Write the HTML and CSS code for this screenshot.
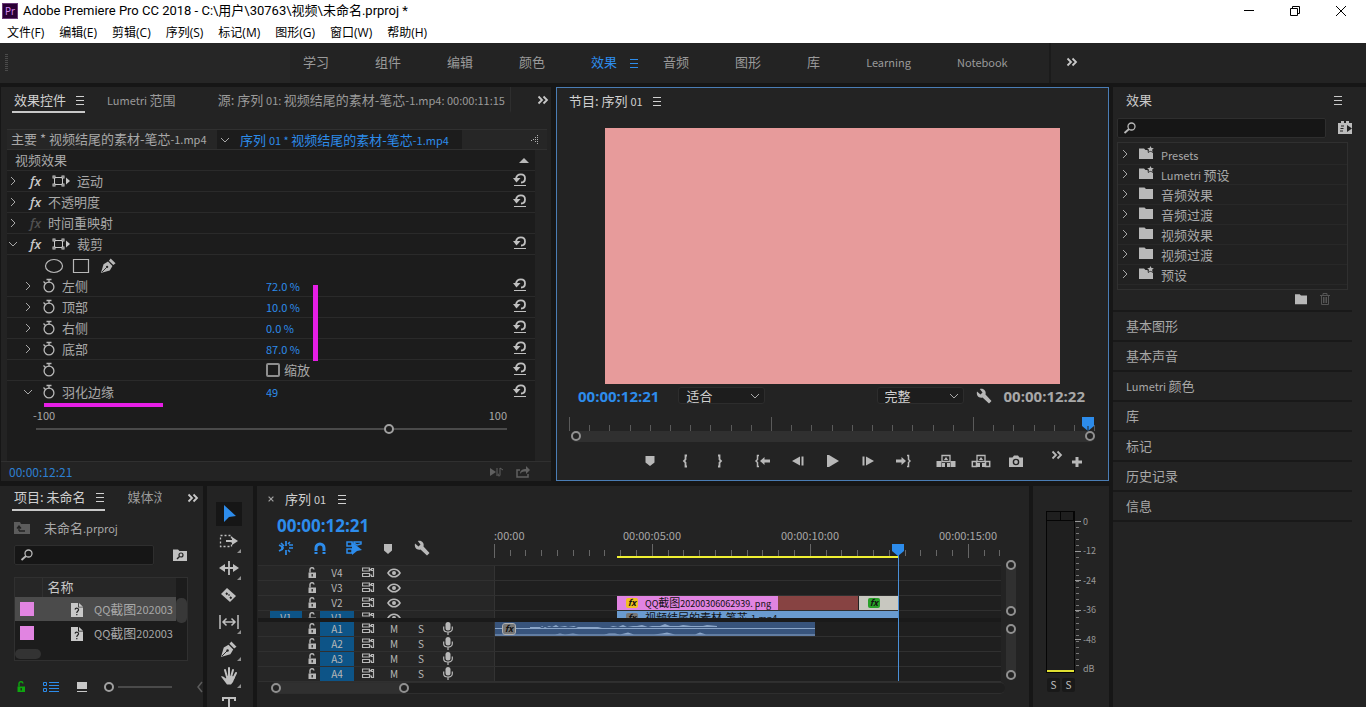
FILE: index.html
```html
<!DOCTYPE html>
<html lang="zh-CN">
<head>
    <meta charset="UTF-8">
    <meta name="viewport" content="width=device-width, initial-scale=1.0">
    <title>Adobe Premiere Pro CC 2018</title>
    <link rel="stylesheet" href="styles.css">
</head>
<body>

<svg class="sprite" aria-hidden="true">
    <symbol id="i-menu" viewBox="0 0 10 10"><path d="M1 1.5h8M1 5.5h8M1 9.5h8" fill="none" stroke="currentColor"/></symbol>
    <symbol id="i-more" viewBox="0 0 12 10"><path d="M1.5 1.5L5 5 1.5 8.500M6.500 1.500L10 5 6.500 8.500" fill="none" stroke="currentColor" stroke-width="1.800"/></symbol>
    <symbol id="i-right" viewBox="0 0 10 10"><path d="M3 1l4 4-4 4" fill="none" stroke="currentColor"/></symbol>
    <symbol id="i-down" viewBox="0 0 10 10"><path d="M1 3l4 4 4-4" fill="none" stroke="currentColor"/></symbol>
    <symbol id="i-motion" viewBox="0 0 20 12"><path d="M3.500 2.500h8v7h-8z" fill="none" stroke="currentColor"/><path d="M1.500 .5h3v3h-3zM10.500 .5h3v3h-3zM1.500 8.500h3v3h-3zM10.500 8.500h3v3h-3z" fill="currentColor"/><path d="M2.500 1.500h1v1h-1zM11.500 1.500h1v1h-1zM2.500 9.500h1v1h-1zM11.500 9.500h1v1h-1z" fill="#1c1c1c"/><path d="M15 2.500l4 3.500-4 3.500z" fill="currentColor"/></symbol>
    <symbol id="i-reset" viewBox="0 0 14 14"><path d="M3 5.500C4 0 12 0 12 5.500c0 2.500-1.500 4-4 4" fill="none" stroke="currentColor" stroke-width="1.800"/><path d="M0 5h7.500L3.500 9.500z" fill="currentColor"/><path d="M1 12.500h12" stroke="currentColor"/></symbol>
    <symbol id="i-watch" viewBox="0 0 14 16"><circle cx="7" cy="9" r="4.900" fill="none" stroke="currentColor" stroke-width="1.300"/><path d="M4.500 1.500h5M7 1.500v3M1.500 3.500l2 2" fill="none" stroke="currentColor" stroke-width="1.300"/></symbol>
    <symbol id="i-pen" viewBox="0 0 18 18"><path d="M1 17l3-10 5-3 5 5-3 5-10 3z" fill="currentColor"/><path d="M10 3l2-2.500 5.500 5.500-2.500 2z" fill="currentColor"/><path d="M2 16l5.500-5.500" stroke="#222" stroke-width="1"/><circle cx="8" cy="10" r="1.300" fill="#222"/></symbol>
    <symbol id="i-search" viewBox="0 0 14 12"><circle cx="8.500" cy="4.500" r="3.500" fill="none" stroke="currentColor" stroke-width="1.300"/><path d="M6 7l-4.500 4" stroke="currentColor" stroke-width="1.800"/></symbol>
    <symbol id="i-folder" viewBox="0 0 16 14"><path d="M1 3V1.500h5.500L8 3h7v10H1z" fill="currentColor"/></symbol>
    <symbol id="i-folder-star" viewBox="0 0 16 14"><path d="M1 4V2.500h5L7.500 4h2l.5 3 2.500-1.500L15 7v6H1z" fill="currentColor"/><path d="M12.500 0l1 2 2.300.2-1.700 1.500.5 2.200-2.100-1.100-2 1.100.5-2.200L9.200 2.200l2.300-.2z" fill="currentColor"/></symbol>
    <symbol id="i-lock" viewBox="0 0 10 12"><path d="M1.500 5.500h7.500v5.500H1.500z" fill="currentColor"/><path d="M3 5.500V3a2 2 0 0 1 4-.5" fill="none" stroke="currentColor" stroke-width="1.400"/><path d="M5.200 7v2.500" stroke="#222" stroke-width="1.300"/></symbol>
    <symbol id="i-sync" viewBox="0 0 13 11"><path d="M.5 1h7v3h-7zM.5 6.500h7v3h-7z" fill="none" stroke="currentColor" stroke-width="1.200"/><path d="M8 2.500h1.500V1.500h2v2H9.500zM11.500 3.500V9M8 8h1.500v1.500h2V7" fill="none" stroke="currentColor" stroke-width="1.200"/></symbol>
    <symbol id="i-eye" viewBox="0 0 14 10"><path d="M1 5c3-5 9-5 12 0-3 5-9 5-12 0z" fill="none" stroke="currentColor" stroke-width="1.600"/><circle cx="7" cy="5" r="2" fill="currentColor"/></symbol>
    <symbol id="i-mic" viewBox="0 0 10 13"><rect x="2.500" y="0" width="5" height="8.500" rx="2.500" fill="currentColor"/><path d="M.7 4.500v2.500c0 4 8.600 4 8.600 0V4.500M5 10v3" fill="none" stroke="currentColor" stroke-width="1.200"/></symbol>
    <symbol id="i-marker" viewBox="0 0 10 12"><path d="M.5 1h9v6.500L5 11 .5 7.500z" fill="currentColor"/></symbol>
    <symbol id="i-wrench" viewBox="0 0 16 16"><path d="M1 3.500l3.500 3L6.500 4.500 3.800 1C7.500 0 10.500 3 9.500 6.500l6 6.500-2.500 2.500-6.500-6C3 10.500 0 7.500 1 3.500z" fill="currentColor"/></symbol>
    <symbol id="i-file" viewBox="0 0 12 14"><path d="M0 0h7v4.500h5V14H0z" fill="currentColor"/><path d="M8 0l4 3.700H8z" fill="currentColor"/><path d="M4 6.500c.5-2 4-1.500 3.500.5C7 8.500 5.800 8 5.800 10M5.800 11v1.300" fill="none" stroke="#222" stroke-width="1.200"/></symbol>
    <symbol id="i-in" viewBox="0 0 6 14"><path d="M5 1.500H3.500v4L2 7l1.500 1.500v4H5" fill="none" stroke="currentColor" stroke-width="1.800"/></symbol>
    <symbol id="i-out" viewBox="0 0 6 14"><path d="M1 1.500h1.500v4L4 7 2.500 8.500v4H1" fill="none" stroke="currentColor" stroke-width="1.800"/></symbol>
    <symbol id="i-to-in" viewBox="0 0 16 14"><path d="M4 1.500H2.500v4L1 7l1.500 1.500v4H4" fill="none" stroke="currentColor" stroke-width="1.500"/><path d="M5 7l4.500-4v2.500H15v3H9.500V11z" fill="currentColor"/></symbol>
    <symbol id="i-to-out" viewBox="0 0 16 14"><path d="M12 1.500h1.500v4L15 7l-1.500 1.500v4H12" fill="none" stroke="currentColor" stroke-width="1.500"/><path d="M11 7L6.500 3v2.500H1v3h5.500V11z" fill="currentColor"/></symbol>
    <symbol id="i-back" viewBox="0 0 14 12"><path d="M1 6l8-4.500v9zM10.500 1.500h2v9h-2z" fill="currentColor"/></symbol>
    <symbol id="i-step" viewBox="0 0 14 12"><path d="M13 6L5 1.500v9zM1.500 1.500h2v9h-2z" fill="currentColor"/></symbol>
    <symbol id="i-play" viewBox="0 0 14 14"><path d="M1 1h2l10 6-10 6H1z" fill="currentColor"/></symbol>
    <symbol id="i-lift" viewBox="0 0 20 14"><path d="M.5 7h5v6h-5zM6 9h3v4H6zM14.500 7h5v6h-5zM11 9h3v4h-3z" fill="currentColor"/><path d="M6 1.500h8v6H6z" fill="none" stroke="currentColor" stroke-width="1.300"/><path d="M10 3l2.200 3H7.800z" fill="currentColor"/></symbol>
    <symbol id="i-extract" viewBox="0 0 20 14"><path d="M1.300 7.500h4.200v5H1.300zM14.500 7.500h4.200v5h-4.200z" fill="none" stroke="currentColor" stroke-width="1.500"/><path d="M6 9h3v4H6zM11 9h3v4h-3z" fill="currentColor"/><path d="M6 1.500h8v6H6z" fill="none" stroke="currentColor" stroke-width="1.300"/><path d="M10 3l2.200 3H7.800z" fill="currentColor"/></symbol>
    <symbol id="i-camera" viewBox="0 0 16 12"><path d="M1 2.500h3.500L6 .5h4l1.500 2H15V12H1z" fill="currentColor"/><circle cx="8" cy="7" r="2.600" fill="none" stroke="#232323" stroke-width="1.400"/></symbol>
    <symbol id="i-plus" viewBox="0 0 12 12"><path d="M6 1v10M1 6h10" stroke="currentColor" stroke-width="3"/></symbol>
    <symbol id="i-close" viewBox="0 0 10 10"><path d="M1 1l8 8M9 1L1 9" fill="none" stroke="currentColor" stroke-width="2"/></symbol>
</svg>

<header class="window-head">
    <div class="title-bar">
        <svg class="logo" viewBox="0 0 16 16"><rect width="16" height="16" fill="#2a0034"/><rect x=".5" y=".5" width="15" height="15" fill="none" stroke="#6b3a78"/><text x="3" y="12" class="logo-text">Pr</text></svg>
        <span class="title-text">Adobe Premiere Pro CC 2018 - C:\用户\30763\视频\未命名.prproj *</span>
        <div class="window-buttons">
            <button aria-label="最小化"><svg viewBox="0 0 12 12"><path d="M1 5.500h10" stroke="#000"/></svg></button>
            <button aria-label="还原"><svg viewBox="0 0 12 12"><path d="M1.500 3.500h7v7h-7zM3.500 3.500v-2h7v7h-2" fill="none" stroke="#000"/></svg></button>
            <button aria-label="关闭"><svg viewBox="0 0 12 12"><path d="M1 1l10 10M11 1L1 11" stroke="#000"/></svg></button>
        </div>
    </div>
    <nav class="menu-bar">
        <button>文件(F)</button>
        <button>编辑(E)</button>
        <button>剪辑(C)</button>
        <button>序列(S)</button>
        <button>标记(M)</button>
        <button>图形(G)</button>
        <button>窗口(W)</button>
        <button>帮助(H)</button>
    </nav>
</header>

<nav class="workspaces">
    <div class="workspace-left"><span class="grip"></span></div>
    <div class="workspace-tabs">
        <button>学习</button>
        <button>组件</button>
        <button>编辑</button>
        <button>颜色</button>
        <button class="active">效果<svg class="icon-10 ws-menu"><use href="#i-menu"/></svg></button>
        <button>音频</button>
        <button>图形</button>
        <button>库</button>
        <button class="latin">Learning</button>
        <button class="latin">Notebook</button>
    </div>
    <button class="workspace-more" aria-label="更多"><svg class="icon-12"><use href="#i-more"/></svg></button>
</nav>

<main class="app">
    <div class="left-area">
        <div class="top-row">

            <!-- Effect controls -->
            <section class="panel effect-controls">
                <div class="tabs">
                    <button class="tab active">效果控件<svg class="icon-10"><use href="#i-menu"/></svg></button>
                    <button class="tab"><span><span class="latin">Lumetri </span>范围</span></button>
                    <button class="tab source-tab"><span>源: 序列 <span class="latin">01: </span>视频结尾的素材-笔芯<span class="latin">-1.mp4: 00:00:11:15</span></span></button>
                    <button class="tabs-more" aria-label="更多"><svg class="icon-12"><use href="#i-more"/></svg></button>
                </div>
                <div class="clip-bar">
                    <span class="clip-master">主要 * 视频结尾的素材-笔芯<span class="latin">-1.mp4</span></span>
                    <span class="clip-sequence"><svg class="icon-10"><use href="#i-down"/></svg><span>序列 <span class="latin">01 * </span>视频结尾的素材-笔芯<span class="latin">-1.mp4</span></span></span>
                    <svg class="clip-arrow" viewBox="0 0 10 12"><path d="M7.500 1v10M5.500 3v6M3.500 5v2M1.500 6v1" stroke="#b0b0b0" stroke-dasharray="1 1"/></svg>
                </div>
                <div class="effects">
                    <div class="effect-row heading"><span>视频效果</span><span class="tri-up"></span></div>
                    <div class="effect-row">
                        <svg class="icon-10"><use href="#i-right"/></svg><i class="fx">fx</i><svg class="motion"><use href="#i-motion"/></svg><span>运动</span>
                        <button class="reset" aria-label="重置"><svg><use href="#i-reset"/></svg></button>
                    </div>
                    <div class="effect-row">
                        <svg class="icon-10"><use href="#i-right"/></svg><i class="fx">fx</i><span>不透明度</span>
                        <button class="reset" aria-label="重置"><svg><use href="#i-reset"/></svg></button>
                    </div>
                    <div class="effect-row">
                        <svg class="icon-10"><use href="#i-right"/></svg><i class="fx off">fx</i><span>时间重映射</span>
                    </div>
                    <div class="effect-row">
                        <svg class="icon-10"><use href="#i-down"/></svg><i class="fx">fx</i><svg class="motion"><use href="#i-motion"/></svg><span>裁剪</span>
                        <button class="reset" aria-label="重置"><svg><use href="#i-reset"/></svg></button>
                    </div>
                    <div class="effect-row shapes">
                        <svg viewBox="0 0 20 16"><ellipse cx="10" cy="8" rx="8.500" ry="6.500" fill="none" stroke="currentColor" stroke-width="1.200"/></svg>
                        <svg viewBox="0 0 20 16"><path d="M2.500 1.500h15v13h-15z" fill="none" stroke="currentColor" stroke-width="1.200"/></svg>
                        <svg><use href="#i-pen"/></svg>
                    </div>
                    <div class="effect-row param">
                        <svg class="icon-10"><use href="#i-right"/></svg><svg class="watch"><use href="#i-watch"/></svg><label for="left">左侧</label>
                        <input type="text" id="left" value="72.0 %">
                        <button class="reset" aria-label="重置"><svg><use href="#i-reset"/></svg></button>
                    </div>
                    <div class="effect-row param">
                        <svg class="icon-10"><use href="#i-right"/></svg><svg class="watch"><use href="#i-watch"/></svg><label for="top">顶部</label>
                        <input type="text" id="top" value="10.0 %">
                        <button class="reset" aria-label="重置"><svg><use href="#i-reset"/></svg></button>
                    </div>
                    <div class="effect-row param">
                        <svg class="icon-10"><use href="#i-right"/></svg><svg class="watch"><use href="#i-watch"/></svg><label for="right">右侧</label>
                        <input type="text" id="right" value="0.0 %">
                        <button class="reset" aria-label="重置"><svg><use href="#i-reset"/></svg></button>
                    </div>
                    <div class="effect-row param">
                        <svg class="icon-10"><use href="#i-right"/></svg><svg class="watch"><use href="#i-watch"/></svg><label for="bottom">底部</label>
                        <input type="text" id="bottom" value="87.0 %">
                        <button class="reset" aria-label="重置"><svg><use href="#i-reset"/></svg></button>
                    </div>
                    <div class="effect-row param">
                        <span class="no-arrow"></span><svg class="watch"><use href="#i-watch"/></svg><span class="no-label"></span>
                        <input type="checkbox" id="zoom"><label class="zoom-label" for="zoom">缩放</label>
                        <button class="reset" aria-label="重置"><svg><use href="#i-reset"/></svg></button>
                    </div>
                    <div class="effect-row param last">
                        <svg class="icon-10"><use href="#i-down"/></svg><svg class="watch"><use href="#i-watch"/></svg><label for="feather">羽化边缘</label>
                        <input type="text" id="feather" value="49">
                        <button class="reset" aria-label="重置"><svg><use href="#i-reset"/></svg></button>
                    </div>
                    <div class="feather">
                        <div class="feather-scale"><span>-100</span><span>100</span></div>
                        <input class="range feather-range" type="range" min="-100" max="100" value="51" aria-label="羽化边缘">
                    </div>
                    <span class="mark mark-values"></span>
                    <span class="mark mark-feather"></span>
                </div>
                <div class="effect-foot">
                    <span>00:00:12:21</span>
                    <svg viewBox="0 0 16 12"><path d="M1 2l6 4-6 4z" fill="currentColor"/><path d="M8 2v8M11 9V2l3 2M11 9a1 1 0 1 1-1-1" fill="none" stroke="currentColor"/></svg>
                    <svg viewBox="0 0 16 12"><path d="M5 4H2v7h11V8" fill="none" stroke="currentColor" stroke-width="1.500"/><path d="M5 8c0-4 3-5 6-5V0l4 4-4 4V5.500C8 5.500 6 6 5 8z" fill="currentColor"/></svg>
                </div>
            </section>

            <!-- Program monitor -->
            <section class="panel program">
                <div class="panel-title"><span>节目: 序列 <span class="latin">01</span></span><svg class="icon-10"><use href="#i-menu"/></svg></div>
                <div class="video"></div>
                <div class="monitor-info">
                    <span class="timecode">00:00:12:21</span>
                    <span class="select-wrap fit"><select aria-label="缩放级别"><option>适合</option></select><svg class="icon-10"><use href="#i-down"/></svg></span>
                    <span class="select-wrap full"><select aria-label="回放分辨率"><option>完整</option></select><svg class="icon-10"><use href="#i-down"/></svg></span>
                    <button aria-label="设置"><svg class="icon-16"><use href="#i-wrench"/></svg></button>
                    <span class="duration">00:00:12:22</span>
                </div>
                <div class="monitor-ruler">
                    <svg width="100%" height="14">
                        <pattern id="ticks-a" width="202" height="14" patternUnits="userSpaceOnUse"><path d="M.5 0v14M20.500 8v6M40.500 8v6M61.500 8v6M81.500 8v6M101.500 8v6M121.500 8v6M141.500 8v6M162.500 8v6M182.500 8v6" stroke="#5a5a5a"/></pattern>
                        <rect width="100%" height="14" fill="url(#ticks-a)"/>
                    </svg>
                    <svg class="monitor-head" viewBox="0 0 12 14"><path d="M0 0h12v9l-6 5-6-5z" fill="#2d8ceb"/><path d="M6 9v5" stroke="#232323"/></svg>
                </div>
                <div class="scroll-bar"><span class="knob"></span><span class="knob"></span></div>
                <div class="transport">
                    <div class="transport-group">
                        <button aria-label="添加标记"><svg width="10" height="12"><use href="#i-marker"/></svg></button>
                        <button aria-label="标记入点"><svg width="6" height="14"><use href="#i-in"/></svg></button>
                        <button aria-label="标记出点"><svg width="6" height="14"><use href="#i-out"/></svg></button>
                    </div>
                    <div class="transport-group">
                        <button aria-label="转到入点"><svg width="16" height="14"><use href="#i-to-in"/></svg></button>
                        <button aria-label="后退一帧"><svg width="14" height="12"><use href="#i-back"/></svg></button>
                        <button aria-label="播放"><svg width="14" height="14"><use href="#i-play"/></svg></button>
                        <button aria-label="前进一帧"><svg width="14" height="12"><use href="#i-step"/></svg></button>
                        <button aria-label="转到出点"><svg width="16" height="14"><use href="#i-to-out"/></svg></button>
                    </div>
                    <div class="transport-group">
                        <button aria-label="提升"><svg width="20" height="14"><use href="#i-lift"/></svg></button>
                        <button aria-label="提取"><svg width="20" height="14"><use href="#i-extract"/></svg></button>
                        <button aria-label="导出帧"><svg width="16" height="12"><use href="#i-camera"/></svg></button>
                    </div>
                    <button class="transport-more" aria-label="更多"><svg class="icon-12"><use href="#i-more"/></svg></button>
                    <button aria-label="按钮编辑器"><svg width="12" height="12"><use href="#i-plus"/></svg></button>
                </div>
            </section>
        </div>

        <div class="bottom-row">

            <!-- Project -->
            <section class="panel project">
                <div class="tabs">
                    <button class="tab active">项目: 未命名<svg class="icon-10"><use href="#i-menu"/></svg></button>
                    <button class="tab media-tab">媒体浏览器</button>
                    <button class="tabs-more" aria-label="更多"><svg class="icon-12"><use href="#i-more"/></svg></button>
                </div>
                <div class="project-name">
                    <svg viewBox="0 0 16 14"><path d="M0 3V1h6l1 2h9v10H0z" fill="#5c5c5c"/><path d="M5 10h6M5 10V6M3 7.500L5 5l2 2.500" fill="none" stroke="#222" stroke-width="1.300"/></svg>
                    <span>未命名<span class="latin">.prproj</span></span>
                </div>
                <div class="search-row">
                    <div class="search"><svg><use href="#i-search"/></svg><input type="text" aria-label="搜索项目"></div>
                    <button aria-label="创建搜索素材箱"><svg viewBox="0 0 16 14"><path d="M1 3V1.500h5L7.500 3H15v10H1z" fill="#c0c0c0"/><circle cx="9" cy="7" r="2" fill="none" stroke="#222" stroke-width="1.200"/><path d="M7.500 8.500L5 11" stroke="#222" stroke-width="1.400"/></svg></button>
                </div>
                <div class="bin">
                    <table>
                        <thead>
                            <tr><th class="col-label"></th><th>名称</th></tr>
                        </thead>
                        <tbody>
                            <tr class="selected"><td><span class="swatch"></span></td><td><svg class="file"><use href="#i-file"/></svg><span class="latin">QQ</span>截图<span class="latin">202003</span></td></tr>
                            <tr><td><span class="swatch"></span></td><td><svg class="file"><use href="#i-file"/></svg><span class="latin">QQ</span>截图<span class="latin">202003</span></td></tr>
                        </tbody>
                    </table>
                    <span class="bin-scroll"></span>
                    <span class="bin-thumb"></span>
                </div>
                <div class="project-foot">
                    <svg class="green" width="10" height="12"><use href="#i-lock"/></svg>
                    <svg class="blue" width="18" height="12" viewBox="0 0 18 12"><path d="M1.500 1.500h3v3h-3zM1.500 7.500h3v3h-3zM7 1.500h10M7 4.500h10M7 7.500h10M7 10.500h10" fill="none" stroke="currentColor"/></svg>
                    <svg width="12" height="12" viewBox="0 0 12 12"><path d="M1 1h10v7H1zM1 10h10v1H1z" fill="#c8c8c8"/></svg>
                    <input class="range" type="range" value="0" aria-label="图标大小">
                    <svg class="foot-arrow" width="6" height="12" viewBox="0 0 6 12"><path d="M5 1L1 6l4 5" fill="none" stroke="#5c5c5c" stroke-width="1.500"/></svg>
                </div>
            </section>

            <!-- Tools -->
            <section class="panel tools">
                <button class="active" aria-label="选择工具"><svg viewBox="0 0 20 20"><path d="M5 1l12 11-7 1-5 5z" fill="#2d8ceb"/></svg></button>
                <button class="more" aria-label="向前选择轨道工具"><svg viewBox="0 0 20 20"><path d="M1.500 4.500h11v11h-11z" fill="none" stroke="currentColor" stroke-width="1.300" stroke-dasharray="2 2"/><path d="M7 9h6V6l6 4-6 4v-3H7z" fill="currentColor"/></svg></button>
                <button class="more" aria-label="波纹编辑工具"><svg viewBox="0 0 20 20"><path d="M10 3v14" stroke="currentColor" stroke-width="1.800"/><path d="M0 10l6-4v3h8V6l6 4-6 4v-3H6v3z" fill="currentColor"/></svg></button>
                <button aria-label="剃刀工具"><svg viewBox="0 0 20 20"><path d="M8 3l9 8-6 6-9-8z" fill="currentColor"/><path d="M7 8l1.500 1.500M9.500 10h1M11 12l1.500 1.500" stroke="#222" stroke-width="1.800"/></svg></button>
                <button class="more" aria-label="外滑工具"><svg viewBox="0 0 20 20"><path d="M1 3v14M19 3v14M5 10h10M7.500 6.500L4 10l3.500 3.500M12.500 6.500L16 10l-3.500 3.500" fill="none" stroke="currentColor" stroke-width="1.500"/></svg></button>
                <button class="more" aria-label="钢笔工具"><svg viewBox="0 0 20 20"><use href="#i-pen" x="1" y="2" width="17" height="17"/></svg></button>
                <button class="more" aria-label="手形工具"><svg viewBox="0 0 20 20"><path d="M6 4l2 7M10 2v9M14 4l-2 7M17 7l-3 6" stroke="currentColor" stroke-width="2" stroke-linecap="round"/><path d="M2 10.500c2-1 3 1 5 2L8 10h5l3 1-2 5-2 2.500H8z" fill="currentColor"/></svg></button>
                <button aria-label="文字工具"><svg viewBox="0 0 20 20"><path d="M4 8V5h12v3M10 5v14M7 19h6" fill="none" stroke="currentColor" stroke-width="2"/></svg></button>
            </section>

            <!-- Timeline -->
            <section class="panel timeline">
                <div class="timeline-tab"><svg class="close"><use href="#i-close"/></svg><span>序列 <span class="latin">01</span></span><svg class="icon-10"><use href="#i-menu"/></svg></div>
                <div class="timeline-top">
                    <div class="timeline-info">
                        <span class="timecode big">00:00:12:21</span>
                        <div class="timeline-tools">
                            <button aria-label="嵌套"><svg viewBox="0 0 16 16"><path d="M8 1v5M8 10v5M1 5l4 2M15 5h-4M1 11l4-2M11 8h4M3 3l3 3M12 12l-2-2M10 4l2-2M3 8h3" stroke="#2d8ceb" stroke-width="1.700"/></svg></button>
                            <button aria-label="对齐"><svg viewBox="0 0 16 16"><path d="M4 14V8a4 4 0 0 1 8 0v6" fill="none" stroke="#2d8ceb" stroke-width="3"/><path d="M2 11.500h12" stroke="#232323"/></svg></button>
                            <button aria-label="链接选择项"><svg viewBox="0 0 16 16"><path d="M1 2h5v4H1zM8 2h7v2l-4 1-3-2zM1 9h5v4H1z" fill="none" stroke="#2d8ceb" stroke-width="1.500"/><path d="M6 2l10 8-5 1-5 4z" fill="#2d8ceb"/></svg></button>
                            <button aria-label="添加标记"><svg viewBox="0 0 16 16"><path d="M4 4h8v6.500L8 14l-4-3.500z" fill="currentColor"/></svg></button>
                            <button aria-label="时间轴显示设置"><svg><use href="#i-wrench"/></svg></button>
                        </div>
                    </div>
                    <div class="ruler">
                        <div class="ruler-labels"><span>:00:00</span><span>00:00:05:00</span><span>00:00:10:00</span><span>00:00:15:00</span></div>
                        <svg width="100%" height="14">
                            <pattern id="ticks-b" width="158" height="14" patternUnits="userSpaceOnUse"><path d="M.5 0v14M16.500 6v6M31.500 6v6M47.500 6v6M63.500 6v6M79.500 6v6M95.500 6v6M110.500 6v6M126.500 6v6M142.500 6v6" stroke="#666"/></pattern>
                            <rect width="100%" height="14" fill="url(#ticks-b)"/>
                        </svg>
                        <span class="render-bar"></span>
                        <div class="playhead"><svg viewBox="0 0 12 12"><path d="M0 0h12v7l-6 5-6-5z" fill="#2d8ceb"/></svg></div>
                    </div>
                </div>
                <div class="tracks">
                    <div class="track-rows">
                        <div class="track"><div class="track-head"><span class="patch"></span><svg class="lock"><use href="#i-lock"/></svg><span class="name">V4</span><svg class="sync"><use href="#i-sync"/></svg><svg class="eye"><use href="#i-eye"/></svg></div><div class="lane"></div></div>
                        <div class="track"><div class="track-head"><span class="patch"></span><svg class="lock"><use href="#i-lock"/></svg><span class="name">V3</span><svg class="sync"><use href="#i-sync"/></svg><svg class="eye"><use href="#i-eye"/></svg></div><div class="lane"></div></div>
                        <div class="track"><div class="track-head"><span class="patch"></span><svg class="lock"><use href="#i-lock"/></svg><span class="name">V2</span><svg class="sync"><use href="#i-sync"/></svg><svg class="eye"><use href="#i-eye"/></svg></div><div class="lane video-lane"><div class="clip still" style="width: 161px"><i class="badge yellow">fx</i><span>QQ<span class="clip-cjk">截图</span>20200306062939. png</span></div><div class="clip brown" style="width: 80px"></div><div class="clip pale" style="width: 40px"><i class="badge lime">fx</i></div></div></div>
                        <div class="track cut"><div class="track-head"><span class="patch on">V1</span><svg class="lock"><use href="#i-lock"/></svg><span class="name on">V1</span><svg class="sync"><use href="#i-sync"/></svg><svg class="eye"><use href="#i-eye"/></svg></div><div class="lane video-lane"><div class="clip movie" style="width: 281px"><i class="badge grey">fx</i><span><span class="clip-cjk">视频结尾的素材-笔芯</span>-1.mp4</span></div></div></div>
                        <div class="track-split"></div>
                        <div class="track"><div class="track-head"><span class="patch"></span><svg class="lock"><use href="#i-lock"/></svg><span class="name on">A1</span><svg class="sync"><use href="#i-sync"/></svg><button>M</button><button>S</button><svg class="mic"><use href="#i-mic"/></svg></div><div class="lane"><div class="clip audio" style="width: 320px"><i class="badge grey">fx</i><svg class="wave" viewBox="0 0 320 14" preserveAspectRatio="none"><path d="M0 6.500h320M0 13h320" stroke="#8ba6c9"/><path d="M35 6h10l2-2 3 2 4-2 3 1 4-2 3 2 6-1 3 1 6-1 4 2h20l4-1h8l3-1 5 1 5-2 4 2 6-1h4l5-1 6 2 4-1h8l5-2 5 2h9l4-1 8 1h12l4-1 10 1v1H35zM60 12.500l5-1 5 1 8-1 6 1h25l5-1h6l5 1 8-2 6 2h20l8-1 5-1 8 2h20l5-2 6 2h15z" fill="#8ba6c9"/></svg></div></div></div>
                        <div class="track"><div class="track-head"><span class="patch"></span><svg class="lock"><use href="#i-lock"/></svg><span class="name on">A2</span><svg class="sync"><use href="#i-sync"/></svg><button>M</button><button>S</button><svg class="mic"><use href="#i-mic"/></svg></div><div class="lane"></div></div>
                        <div class="track"><div class="track-head"><span class="patch"></span><svg class="lock"><use href="#i-lock"/></svg><span class="name on">A3</span><svg class="sync"><use href="#i-sync"/></svg><button>M</button><button>S</button><svg class="mic"><use href="#i-mic"/></svg></div><div class="lane"></div></div>
                        <div class="track"><div class="track-head"><span class="patch"></span><svg class="lock"><use href="#i-lock"/></svg><span class="name on">A4</span><svg class="sync"><use href="#i-sync"/></svg><button>M</button><button>S</button><svg class="mic"><use href="#i-mic"/></svg></div><div class="lane"></div></div>
                    </div>
                    <div class="track-scrolls">
                        <div class="v-scroll"><span class="knob"></span><span class="knob"></span></div>
                        <div class="v-scroll"><span class="knob"></span><span class="knob"></span></div>
                    </div>
                </div>
                <div class="timeline-scroll"><div class="scroll-bar"><span class="knob"></span><span class="knob"></span></div></div>
            </section>

            <!-- Audio meters -->
            <section class="panel meters">
                <div class="meter">
                    <div class="meter-column">
                        <div class="meter-box"><span></span><span></span></div>
                        <div class="solo"><button>S</button><button>S</button></div>
                    </div>
                    <svg class="meter-ticks" width="6" height="152"><path d="M2.500 4v146" stroke="#777" stroke-width="3" stroke-dasharray="1 5"/><path d="M0 4.500h6M0 34.500h6M0 63.500h6M0 93.500h6M0 122.500h6" stroke="#999"/></svg>
                    <div class="meter-labels"><span>0</span><span>-12</span><span>-24</span><span>-36</span><span>-48</span><span>dB</span></div>
                </div>
            </section>
        </div>
    </div>

    <!-- Effects browser -->
    <aside class="panel effects-panel">
        <div class="side-title"><span>效果</span><svg class="icon-10"><use href="#i-menu"/></svg></div>
        <div class="side-search">
            <div class="search"><svg><use href="#i-search"/></svg><input type="text" aria-label="搜索效果"></div>
            <svg class="fx-badge" viewBox="0 0 14 14"><path d="M0 2h3V0h3v2h2V0h3v2h3v11H0z" fill="#bcbcbc"/><path d="M3 5h3M2.500 7.500h3M2 10h3" stroke="#232323"/><path d="M9 4l5 3.500L9 11z" fill="#232323"/></svg>
        </div>
        <ul class="tree">
            <li><svg class="icon-10"><use href="#i-right"/></svg><svg class="folder"><use href="#i-folder-star"/></svg><span class="latin">Presets</span></li>
            <li><svg class="icon-10"><use href="#i-right"/></svg><svg class="folder"><use href="#i-folder-star"/></svg><span><span class="latin">Lumetri </span>预设</span></li>
            <li><svg class="icon-10"><use href="#i-right"/></svg><svg class="folder"><use href="#i-folder"/></svg><span>音频效果</span></li>
            <li><svg class="icon-10"><use href="#i-right"/></svg><svg class="folder"><use href="#i-folder"/></svg><span>音频过渡</span></li>
            <li><svg class="icon-10"><use href="#i-right"/></svg><svg class="folder"><use href="#i-folder"/></svg><span>视频效果</span></li>
            <li><svg class="icon-10"><use href="#i-right"/></svg><svg class="folder"><use href="#i-folder"/></svg><span>视频过渡</span></li>
            <li><svg class="icon-10"><use href="#i-right"/></svg><svg class="folder"><use href="#i-folder-star"/></svg><span>预设</span></li>
        </ul>
        <div class="tree-foot">
            <button aria-label="新建自定义素材箱"><svg width="14" height="12"><use href="#i-folder"/></svg></button>
            <button aria-label="删除"><svg width="12" height="12" viewBox="0 0 12 12"><path d="M1 2.500h10M4 2V.5h4V2M2.500 3v8.500h7V3M4.500 4v6M6 4v6M7.500 4v6" fill="none" stroke="#555"/></svg></button>
        </div>
        <div class="side-sections">
            <button>基本图形</button>
            <button>基本声音</button>
            <button><span class="latin">Lumetri </span>颜色</button>
            <button>库</button>
            <button>标记</button>
            <button>历史记录</button>
            <button>信息</button>
        </div>
    </aside>
</main>

</body>
</html>
```

FILE: styles.css
```css
* {
    box-sizing: border-box;
}

body {
    margin: 0;
    height: 100vh;
    display: flex;
    flex-direction: column;
    overflow: hidden;
    background: #161616;
    color: #a8a8a8;
    font-family: "Noto Sans CJK SC", sans-serif;
    font-size: 13px;
    line-height: 20px;
}

button, input, select {
    margin: 0;
    padding: 0;
    border: none;
    background: none;
    color: inherit;
    font: inherit;
}

button {
    white-space: nowrap;
    cursor: pointer;
}

svg {
    display: block;
    flex: none;
}

.sprite {
    display: none;
}

.latin {
    font-size: 11px;
    white-space: pre;
}

.icon-10 {
    width: 10px;
    height: 10px;
}

.icon-12 {
    width: 12px;
    height: 10px;
}

.icon-16 {
    width: 16px;
    height: 16px;
}

/* Window title and menus */
.window-head {
    flex: none;
    background: #fff;
    color: #000;
    font-family: "Open Sans", "Noto Sans CJK SC", sans-serif;
}

.title-bar {
    display: flex;
    align-items: center;
    height: 22px;
    padding-left: 2px;
}

.title-text {
    font-family: Roboto, "Noto Sans CJK SC", sans-serif;
}

.logo {
    width: 16px;
    height: 16px;
    margin-right: 5px;
}

.logo-text {
    fill: #d78cf0;
    font-size: 10px;
}

.window-buttons {
    display: flex;
    margin-left: auto;
    padding-right: 2px;
}

.window-buttons button {
    width: 46px;
    height: 20px;
    display: flex;
    align-items: center;
    justify-content: center;
}

.window-buttons svg {
    width: 12px;
    height: 12px;
}

.menu-bar {
    display: flex;
    gap: 15px;
    height: 21px;
    padding-left: 7px;
    font-size: 12px;
}

/* Workspaces */
.workspaces {
    flex: none;
    display: flex;
    height: 40px;
    margin-bottom: 4px;
    background: #232323;
}

.workspace-left {
    display: flex;
    align-items: center;
    width: 290px;
    padding-left: 5px;
    background: #262626;
}

.grip {
    width: 3px;
    height: 18px;
    background: repeating-linear-gradient(#4a4a4a 0 1px, transparent 1px 2px);
}

.workspace-tabs {
    display: flex;
    gap: 46px;
    flex: 0 1 761px;
    padding-left: 13px;
    padding-bottom: 2px;
    border-right: 2px solid #1b1b1b;
    color: #9a9a9a;
}

.workspace-tabs button {
    position: relative;
}

.workspace-tabs .active {
    color: #2d8ceb;
}

.ws-menu {
    position: absolute;
    left: 38px;
    top: 15px;
    color: #2d8ceb;
}

.workspace-more {
    padding: 0 0 2px 15px;
    color: #c8c8c8;
}

/* Layout */
.app {
    flex: 1;
    display: flex;
    gap: 4px;
    min-height: 0;
}

.left-area {
    flex: 1;
    display: flex;
    flex-direction: column;
    gap: 5px;
    min-width: 0;
}

.top-row {
    display: grid;
    grid-template-columns: 551fr 553fr;
    gap: 5px;
}

.bottom-row {
    flex: 1;
    display: flex;
    gap: 4px;
    min-height: 0;
}

.panel {
    background: #232323;
    overflow: hidden;
}

.tabs {
    display: flex;
    gap: 23px;
    height: 26px;
    padding-left: 12px;
}

.tab {
    display: flex;
    align-items: center;
    height: 26px;
    padding-top: 2px;
    border-bottom: 2px solid transparent;
    color: #9a9a9a;
}

.tab.active {
    gap: 9px;
    padding-left: 2px;
    border-color: #c8c8c8;
    color: #d0d0d0;
}

.tabs-more {
    margin-left: auto;
    padding-right: 4px;
    color: #c8c8c8;
}

/* Effect controls */
.effect-controls {
    display: flex;
    flex-direction: column;
    min-width: 0;
    border-left: 1px solid #161616;
}

.effect-controls .tabs {
    gap: 22px;
    padding-left: 11px;
    margin-bottom: 16px;
}

.effect-controls .tabs-more {
    padding-right: 2px;
}

.source-tab {
    margin-left: 20px;
    padding-right: 5px;
    border-right: 1px solid #2e2e2e;
}

.clip-bar {
    display: flex;
    height: 21px;
    margin: 0 4px 0 6px;
    border-top: 1px solid #303030;
    border-bottom: 1px solid #303030;
    background: #262626;
    line-height: 18px;
}

.clip-master {
    width: 210px;
    padding-left: 4px;
    white-space: nowrap;
}

.clip-sequence {
    display: flex;
    align-items: center;
    gap: 10px;
    width: 245px;
    padding-left: 3px;
    background: #1c1c1c;
    color: #2d8ceb;
    white-space: nowrap;
}

.clip-sequence > svg {
    color: #a8a8a8;
}

.clip-arrow {
    width: 10px;
    height: 12px;
    margin: 4px 7px 0 auto;
}

.effects {
    position: relative;
    flex: 1;
    margin: 0 16px 0 6px;
    background: #1c1c1c;
}

.effect-row {
    display: flex;
    align-items: center;
    height: 21px;
    padding-left: 1px;
    padding-right: 8px;
    border-bottom: 1px solid #2a2a2a;
}

.effect-row > .icon-10 {
    margin-right: 10px;
}

.effect-row.heading {
    justify-content: space-between;
    padding-left: 8px;
    padding-right: 6px;
}

.tri-up {
    border: 5px solid transparent;
    border-top: none;
    border-bottom-color: #b8b8b8;
}

.fx {
    width: 18px;
    margin-left: 2px;
    color: #c8c8c8;
    font-family: "Open Sans", sans-serif;
    font-weight: 600;
}

.fx.off {
    color: #505050;
}

.motion {
    width: 20px;
    height: 12px;
    margin: 0 6px 0 3px;
    color: #c8c8c8;
}

.reset {
    margin-left: auto;
    padding-bottom: 2px;
    color: #c0c0c0;
}

.reset svg {
    width: 14px;
    height: 14px;
}

.effect-row.shapes {
    gap: 7px;
    padding-left: 37px;
    border-bottom: none;
    color: #b8b8b8;
}

.shapes svg {
    width: 20px;
    height: 16px;
}

.effect-row.param {
    padding-left: 16px;
}

.param > .icon-10 {
    margin-right: 9px;
}

.effect-row.last {
    border-bottom: none;
}

.no-arrow {
    width: 19px;
}

.watch {
    width: 14px;
    height: 16px;
    margin-right: 6px;
    color: #b8b8b8;
}

.param label,
.no-label {
    width: 204px;
}

.param .zoom-label {
    width: auto;
    margin-left: 4px;
}

.param input[type="text"] {
    width: 50px;
    height: 18px;
    color: #2d8ceb;
    font-size: 11px;
}

.param input[type="checkbox"] {
    appearance: none;
    width: 14px;
    height: 14px;
    border: 2px solid #8f8f8f;
    border-radius: 2px;
}

.feather {
    padding: 7px 28px 0 26px;
}

.feather-scale {
    display: flex;
    justify-content: space-between;
    height: 14px;
    line-height: 12px;
    font-size: 11px;
}

.range {
    appearance: none;
    display: block;
    height: 12px;
    background: linear-gradient(#4a4a4a, #4a4a4a) center / 100% 2px no-repeat;
}

.range::-webkit-slider-thumb {
    appearance: none;
    width: 10px;
    height: 10px;
    border: 2px solid #a0a0a0;
    border-radius: 50%;
    background: #1c1c1c;
}

.feather-range {
    width: 100%;
    border-left: 3px solid #1c1c1c;
}

.mark {
    position: absolute;
    background: #e61ee6;
}

.mark-values {
    left: 306px;
    top: 135px;
    width: 5px;
    height: 76px;
}

.mark-feather {
    left: 37px;
    top: 253px;
    width: 119px;
    height: 4px;
}

.effect-foot {
    display: flex;
    align-items: center;
    gap: 10px;
    height: 20px;
    padding: 2px 20px 0 8px;
    border-top: 1px solid #303030;
    color: #606060;
}

.effect-foot span {
    flex: 1;
    color: #2d7fd0;
    font-size: 12px;
}

.effect-foot svg {
    width: 16px;
    height: 12px;
}

/* Program monitor */
.program {
    min-width: 0;
    border: 1px solid #4a7db5;
}

.panel-title {
    display: flex;
    align-items: center;
    gap: 9px;
    height: 26px;
    margin-bottom: 14px;
    padding-left: 12px;
    color: #d0d0d0;
}

.video {
    margin: 0 48px;
    aspect-ratio: 16 / 9;
    background: #e79b9b;
}

.monitor-info {
    display: flex;
    align-items: center;
    height: 26px;
    padding: 0 23px 2px 21px;
}

.timecode,
.duration {
    font-family: "Open Sans", sans-serif;
    font-size: 15px;
    font-weight: 700;
}

.timecode {
    color: #2d8ceb;
}

.monitor-info button {
    margin: 0 12px 0 12px;
    color: #b8b8b8;
}

.select-wrap {
    position: relative;
    width: 87px;
}

.select-wrap.fit {
    margin-left: 19px;
    margin-right: auto;
}

.select-wrap select {
    appearance: none;
    display: block;
    width: 100%;
    height: 17px;
    padding-left: 7px;
    border: 1px solid #2d2d2d;
    border-radius: 3px;
    background: #1d1d1d;
    color: #d0d0d0;
    line-height: 15px;
}

.select-wrap svg {
    position: absolute;
    right: 5px;
    top: 4px;
    pointer-events: none;
}

.monitor-ruler {
    position: relative;
    height: 21px;
    margin: 0 13px 0 12px;
    padding-top: 7px;
}

.monitor-head {
    position: absolute;
    right: 1px;
    top: 7px;
    width: 12px;
    height: 14px;
}

.scroll-bar {
    display: flex;
    align-items: center;
    justify-content: space-between;
    height: 11px;
    border-radius: 6px;
    background: #303030;
}

.program .scroll-bar {
    margin: 0 13px 0 14px;
}

.knob {
    width: 10px;
    height: 10px;
    border: 2px solid #909090;
    border-radius: 50%;
    background: #232323;
}

.transport {
    display: flex;
    align-items: center;
    gap: 8px;
    height: 38px;
    padding: 0 25px 0 75px;
    color: #b8b8b8;
}

.transport-group {
    display: flex;
}

.transport-group button {
    display: flex;
    align-items: center;
    justify-content: center;
    width: 35px;
    height: 20px;
}

.transport-more {
    margin: 0 0 12px auto;
}

.transport-more + button {
    padding-top: 2px;
}

/* Project */
.project {
    width: 203px;
    flex: none;
}

.project .tabs {
    height: 25px;
}

.project .tab {
    height: 25px;
    padding-top: 0;
}

.media-tab {
    width: 34px;
    overflow: hidden;
}

.project-name {
    display: flex;
    align-items: center;
    gap: 14px;
    height: 34px;
    padding-left: 14px;
}

.project-name svg {
    width: 16px;
    height: 14px;
}

.search-row {
    display: flex;
    align-items: center;
    gap: 18px;
    padding: 0 15px 0 14px;
}

.search-row svg {
    width: 16px;
    height: 14px;
}

.search {
    flex: 1;
    display: flex;
    align-items: center;
    height: 20px;
    padding-left: 5px;
    border: 1px solid #2e2e2e;
    border-radius: 2px;
    background: #161616;
    color: #b8b8b8;
}

.search svg {
    width: 14px;
    height: 12px;
}

.search input {
    width: 100%;
    min-width: 0;
}

.bin {
    position: relative;
    height: 84px;
    margin: 12px 15px 0 14px;
    border: 1px solid #303030;
    background: #1c1c1c;
}

.bin table {
    width: 161px;
    table-layout: fixed;
    border-collapse: collapse;
    line-height: 18px;
}

.bin th {
    height: 19px;
    padding: 0 0 0 5px;
    background: #262626;
    color: #c8c8c8;
    font-weight: 400;
    text-align: left;
}

.bin .col-label {
    width: 27px;
    border-right: 1px solid #303030;
}

.bin td {
    height: 24px;
    padding: 0 0 0 5px;
    white-space: nowrap;
}

.bin td + td {
    padding-left: 29px;
}

.bin .selected {
    background: #4b4b4b;
}

.swatch {
    display: block;
    width: 14px;
    height: 14px;
    background: #e184e1;
}

.file {
    display: inline-block;
    width: 12px;
    height: 14px;
    margin-right: 11px;
    color: #c8c8c8;
    vertical-align: -3px;
}

.bin-scroll {
    position: absolute;
    right: 0;
    top: 20px;
    width: 11px;
    height: 25px;
    border-radius: 5px;
    background: #383838;
}

.bin-thumb {
    position: absolute;
    left: 0;
    bottom: 1px;
    width: 26px;
    height: 10px;
    border-radius: 5px;
    background: #333;
}

.project-foot {
    display: flex;
    align-items: center;
    gap: 16px;
    height: 52px;
    padding-left: 16px;
}

.project-foot .range {
    flex: none;
    width: 68px;
    background: linear-gradient(#4a4a4a, #4a4a4a) right center / 54px 2px no-repeat;
}

.foot-arrow {
    margin-left: auto;
}

.green {
    color: #0fa60f;
}

.blue {
    color: #2d8ceb;
}

/* Tools */
.tools {
    flex: none;
    display: flex;
    flex-direction: column;
    align-items: center;
    gap: 3px;
    width: 46px;
    padding: 16px 3px 0 0;
    color: #c0c0c0;
}

.tools button {
    position: relative;
    display: flex;
    flex: none;
    align-items: center;
    justify-content: center;
    width: 26px;
    height: 24px;
}

.tools .active {
    background: #161616;
}

.tools svg {
    width: 20px;
    height: 20px;
}

.tools .more::after {
    content: "";
    position: absolute;
    right: 1px;
    bottom: 0;
    border: 2px solid transparent;
    border-right-color: #909090;
    border-bottom-color: #909090;
}

/* Timeline */
.timeline {
    flex: 1;
    min-width: 0;
    padding-left: 1px;
}

.timeline-tab {
    display: flex;
    align-items: center;
    gap: 11px;
    height: 26px;
    margin-bottom: 1px;
    padding-left: 10px;
    color: #d0d0d0;
}

.close {
    width: 6px;
    height: 6px;
    color: #a0a0a0;
}

.timeline-top {
    display: flex;
    height: 52px;
    padding-right: 28px;
}

.timeline-info {
    width: 236px;
    flex: none;
    padding: 3px 0 0 19px;
}

.timecode.big {
    display: block;
    font-size: 17px;
}

.timeline-tools {
    display: flex;
    gap: 18px;
    height: 24px;
    padding-left: 1px;
    color: #b8b8b8;
}

.timeline-tools svg {
    width: 16px;
    height: 16px;
}

.ruler {
    position: relative;
    flex: 1;
    min-width: 0;
    padding-top: 14px;
}

.ruler-labels {
    display: flex;
    height: 17px;
    line-height: 16px;
    font-size: 11px;
}

.ruler-labels span {
    flex: none;
    width: 158px;
    text-align: center;
}

.ruler-labels span:first-child {
    width: 79px;
    text-align: left;
}

.render-bar {
    position: absolute;
    left: 123px;
    top: 43px;
    width: 281px;
    height: 2px;
    background: #f0f032;
}

.playhead {
    position: absolute;
    z-index: 2;
    left: 404px;
    top: 31px;
    width: 1px;
    height: 137px;
    background: #4a90d8;
}

.playhead svg {
    position: absolute;
    left: -6px;
    top: 0;
    width: 12px;
    height: 12px;
}

.tracks {
    display: flex;
}

.track-rows {
    flex: 1;
    min-width: 0;
    border-top: 1px solid #2e2e2e;
}

.track {
    display: flex;
    height: 15px;
    overflow: hidden;
    border-bottom: 1px solid #303030;
    font-size: 10px;
    line-height: 14px;
}

.track.cut {
    height: 7px;
    border-bottom: none;
}

.track-split {
    height: 4px;
    background: #1a1a1a;
}

.track-head {
    flex: none;
    display: flex;
    align-items: center;
    width: 236px;
    height: 14px;
    padding-left: 12px;
    background: #262626;
    color: #b8b8b8;
}

.patch {
    width: 32px;
    height: 14px;
    text-align: center;
}

.name {
    width: 34px;
    height: 14px;
    text-align: center;
}

.patch.on,
.name.on {
    background: #0d5487;
}

.lock {
    width: 10px;
    height: 12px;
    margin: 0 3px 0 5px;
}

.sync {
    width: 13px;
    height: 11px;
    margin: 0 12px 0 8px;
}

.eye {
    width: 14px;
    height: 10px;
}

.track-head button {
    width: 14px;
    margin-right: 13px;
}

.mic {
    width: 10px;
    height: 13px;
    margin-left: 2px;
}

.lane {
    flex: 1;
    display: flex;
    min-width: 0;
    background: #1f1f1f;
    border-left: 1px solid #333;
}

.video-lane {
    padding-left: 122px;
}

.clip {
    flex: none;
    display: flex;
    align-items: center;
    height: 14px;
    overflow: hidden;
    color: #111;
    font-size: 9px;
    white-space: nowrap;
}

.clip-cjk {
    font-size: 11px;
}

.still {
    padding-left: 9px;
    background: #e184e1;
}

.brown {
    background: #874342;
}

.pale {
    padding-left: 9px;
    border-left: 1px solid #222;
    background: #c8c8c0;
}

.movie {
    padding-left: 9px;
    background: #6a9bd0;
}

.audio {
    position: relative;
    padding-left: 8px;
    background: #38547c;
}

.badge {
    z-index: 1;
    width: 12px;
    height: 10px;
    margin-right: 7px;
    border-radius: 2px;
    font-weight: 700;
    line-height: 9px;
    text-align: center;
}

.badge.yellow {
    background: #f0c020;
}

.badge.lime {
    background: #28a028;
}

.badge.grey {
    outline: 1px solid #b0b0b0;
    background: #777;
}

.movie .badge.grey {
    outline: none;
}

.wave {
    position: absolute;
    left: 0;
    top: 0;
    width: 100%;
    height: 14px;
}

.track-scrolls {
    flex: none;
    width: 28px;
    display: flex;
    flex-direction: column;
    align-items: center;
    gap: 8px;
    padding-right: 9px;
    margin-top: -5px;
}

.v-scroll {
    display: flex;
    flex-direction: column;
    justify-content: space-between;
    width: 10px;
    height: 56px;
    border-radius: 5px;
    background: #303030;
}

.timeline-scroll {
    height: 12px;
    margin: 0 24px 0 13px;
    border-top: 1px solid #2e2e2e;
    border-bottom: 1px solid #2e2e2e;
    border-radius: 5px;
    background: #1f1f1f;
}

.timeline-scroll .scroll-bar {
    width: 138px;
    height: 10px;
}

/* Audio meters */
.meters {
    flex: none;
    width: 76px;
    padding: 25px 0 0 13px;
}

.meter {
    display: flex;
    color: #989898;
    font-size: 9px;
}

.meter-box {
    display: flex;
    width: 29px;
    height: 162px;
    border: 1px solid #050505;
    background: linear-gradient(#050505, #050505) 0 8px / 100% 1px no-repeat #1f1f1f;
}

.meter-box span {
    flex: 1;
    border-bottom: 2px solid #e0e032;
    background: linear-gradient(#050505, #050505) right top / 1px 8px no-repeat;
}

.solo {
    display: flex;
    gap: 2px;
    padding: 5px 0 0 1px;
}

.solo button {
    width: 13px;
    height: 14px;
    border-radius: 2px;
    background: #191919;
    color: #c0c0c0;
    font-size: 10px;
    line-height: 14px;
}

.meter-ticks {
    margin-top: 6px;
}

.meter-labels {
    display: flex;
    flex-direction: column;
    justify-content: space-between;
    height: 164px;
    padding: 5px 0 0 2px;
    line-height: 12px;
}

/* Effects browser */
.effects-panel {
    flex: none;
    width: 253px;
    padding-right: 14px;
}

.side-title {
    display: flex;
    align-items: center;
    justify-content: space-between;
    height: 26px;
    padding: 0 9px 0 13px;
    color: #c8c8c8;
}

.side-search {
    display: flex;
    align-items: center;
    gap: 12px;
    padding: 5px 0 4px 4px;
}

.fx-badge {
    width: 14px;
    height: 14px;
}

.tree {
    height: 148px;
    margin: 0 4px 0 4px;
    padding: 2px 0 0;
    border: 1px solid #303030;
    background: #212121;
    list-style: none;
}

.tree li {
    display: flex;
    align-items: center;
    height: 20px;
    padding-left: 2px;
    border-bottom: 1px solid #282828;
}

.folder {
    width: 16px;
    height: 14px;
    margin: 0 7px 4px 8px;
    color: #b8b8b8;
}

.tree .icon-10 {
    margin-bottom: 2px;
}

.tree-foot {
    display: flex;
    justify-content: flex-end;
    gap: 11px;
    height: 20px;
    padding: 0 21px 2px 0;
    color: #b8b8b8;
}

.side-sections button {
    display: block;
    width: 100%;
    height: 30px;
    padding-left: 13px;
    border-top: 2px solid #191919;
    text-align: left;
}

.side-sections button:last-child {
    height: 32px;
    border-bottom: 2px solid #191919;
}
```
